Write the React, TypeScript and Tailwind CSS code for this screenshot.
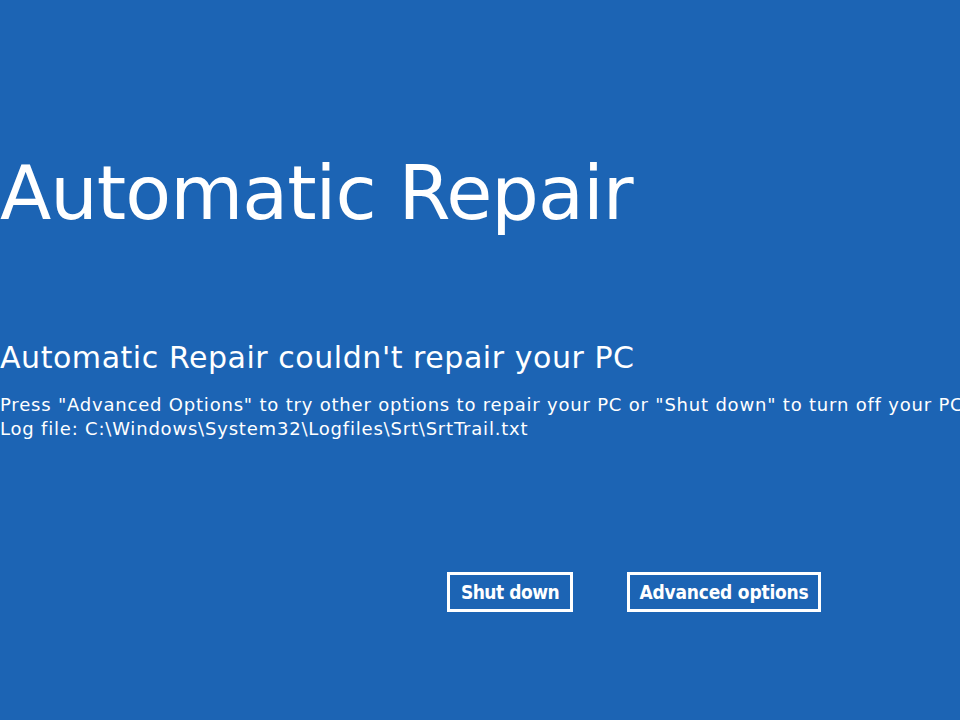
export default function App() {
  return (
    <div className="w-[960px] h-[720px] bg-[#1c64b4] text-white overflow-hidden font-['DejaVu_Sans',sans-serif]">
      <div className="pt-[148px]">
        <h1 className="text-[75px] leading-[90px] font-normal whitespace-nowrap tracking-[-1px]">Automatic Repair</h1>
      </div>
      <div className="mt-[102px]">
        <h2 className="text-[30px] leading-[36px] whitespace-nowrap tracking-[0.55px]">Automatic Repair couldn't repair your PC</h2>
        <p className="mt-[17px] text-[18px] leading-[24px] whitespace-nowrap tracking-[0.8px]">
          Press "Advanced Options" to try other options to repair your PC or "Shut down" to turn off your PC.
        </p>
        <p className="text-[18px] leading-[24px] whitespace-nowrap tracking-[0.8px]">Log file: C:\Windows\System32\Logfiles\Srt\SrtTrail.txt</p>
      </div>
      <div className="mt-[131px] flex pl-[447px] gap-[54px] font-['DejaVu_Sans_Condensed','DejaVu_Sans',sans-serif] font-stretch-condensed">
        <button className="w-[126px] h-[40px] border-[3px] border-white font-bold text-[19px] tracking-[-0.5px] leading-none flex items-center justify-center">
          Shut down
        </button>
        <button className="w-[194px] h-[40px] border-[3px] border-white font-bold text-[19px] tracking-[-0.2px] leading-none flex items-center justify-center">
          Advanced options
        </button>
      </div>
    </div>
  )
}
